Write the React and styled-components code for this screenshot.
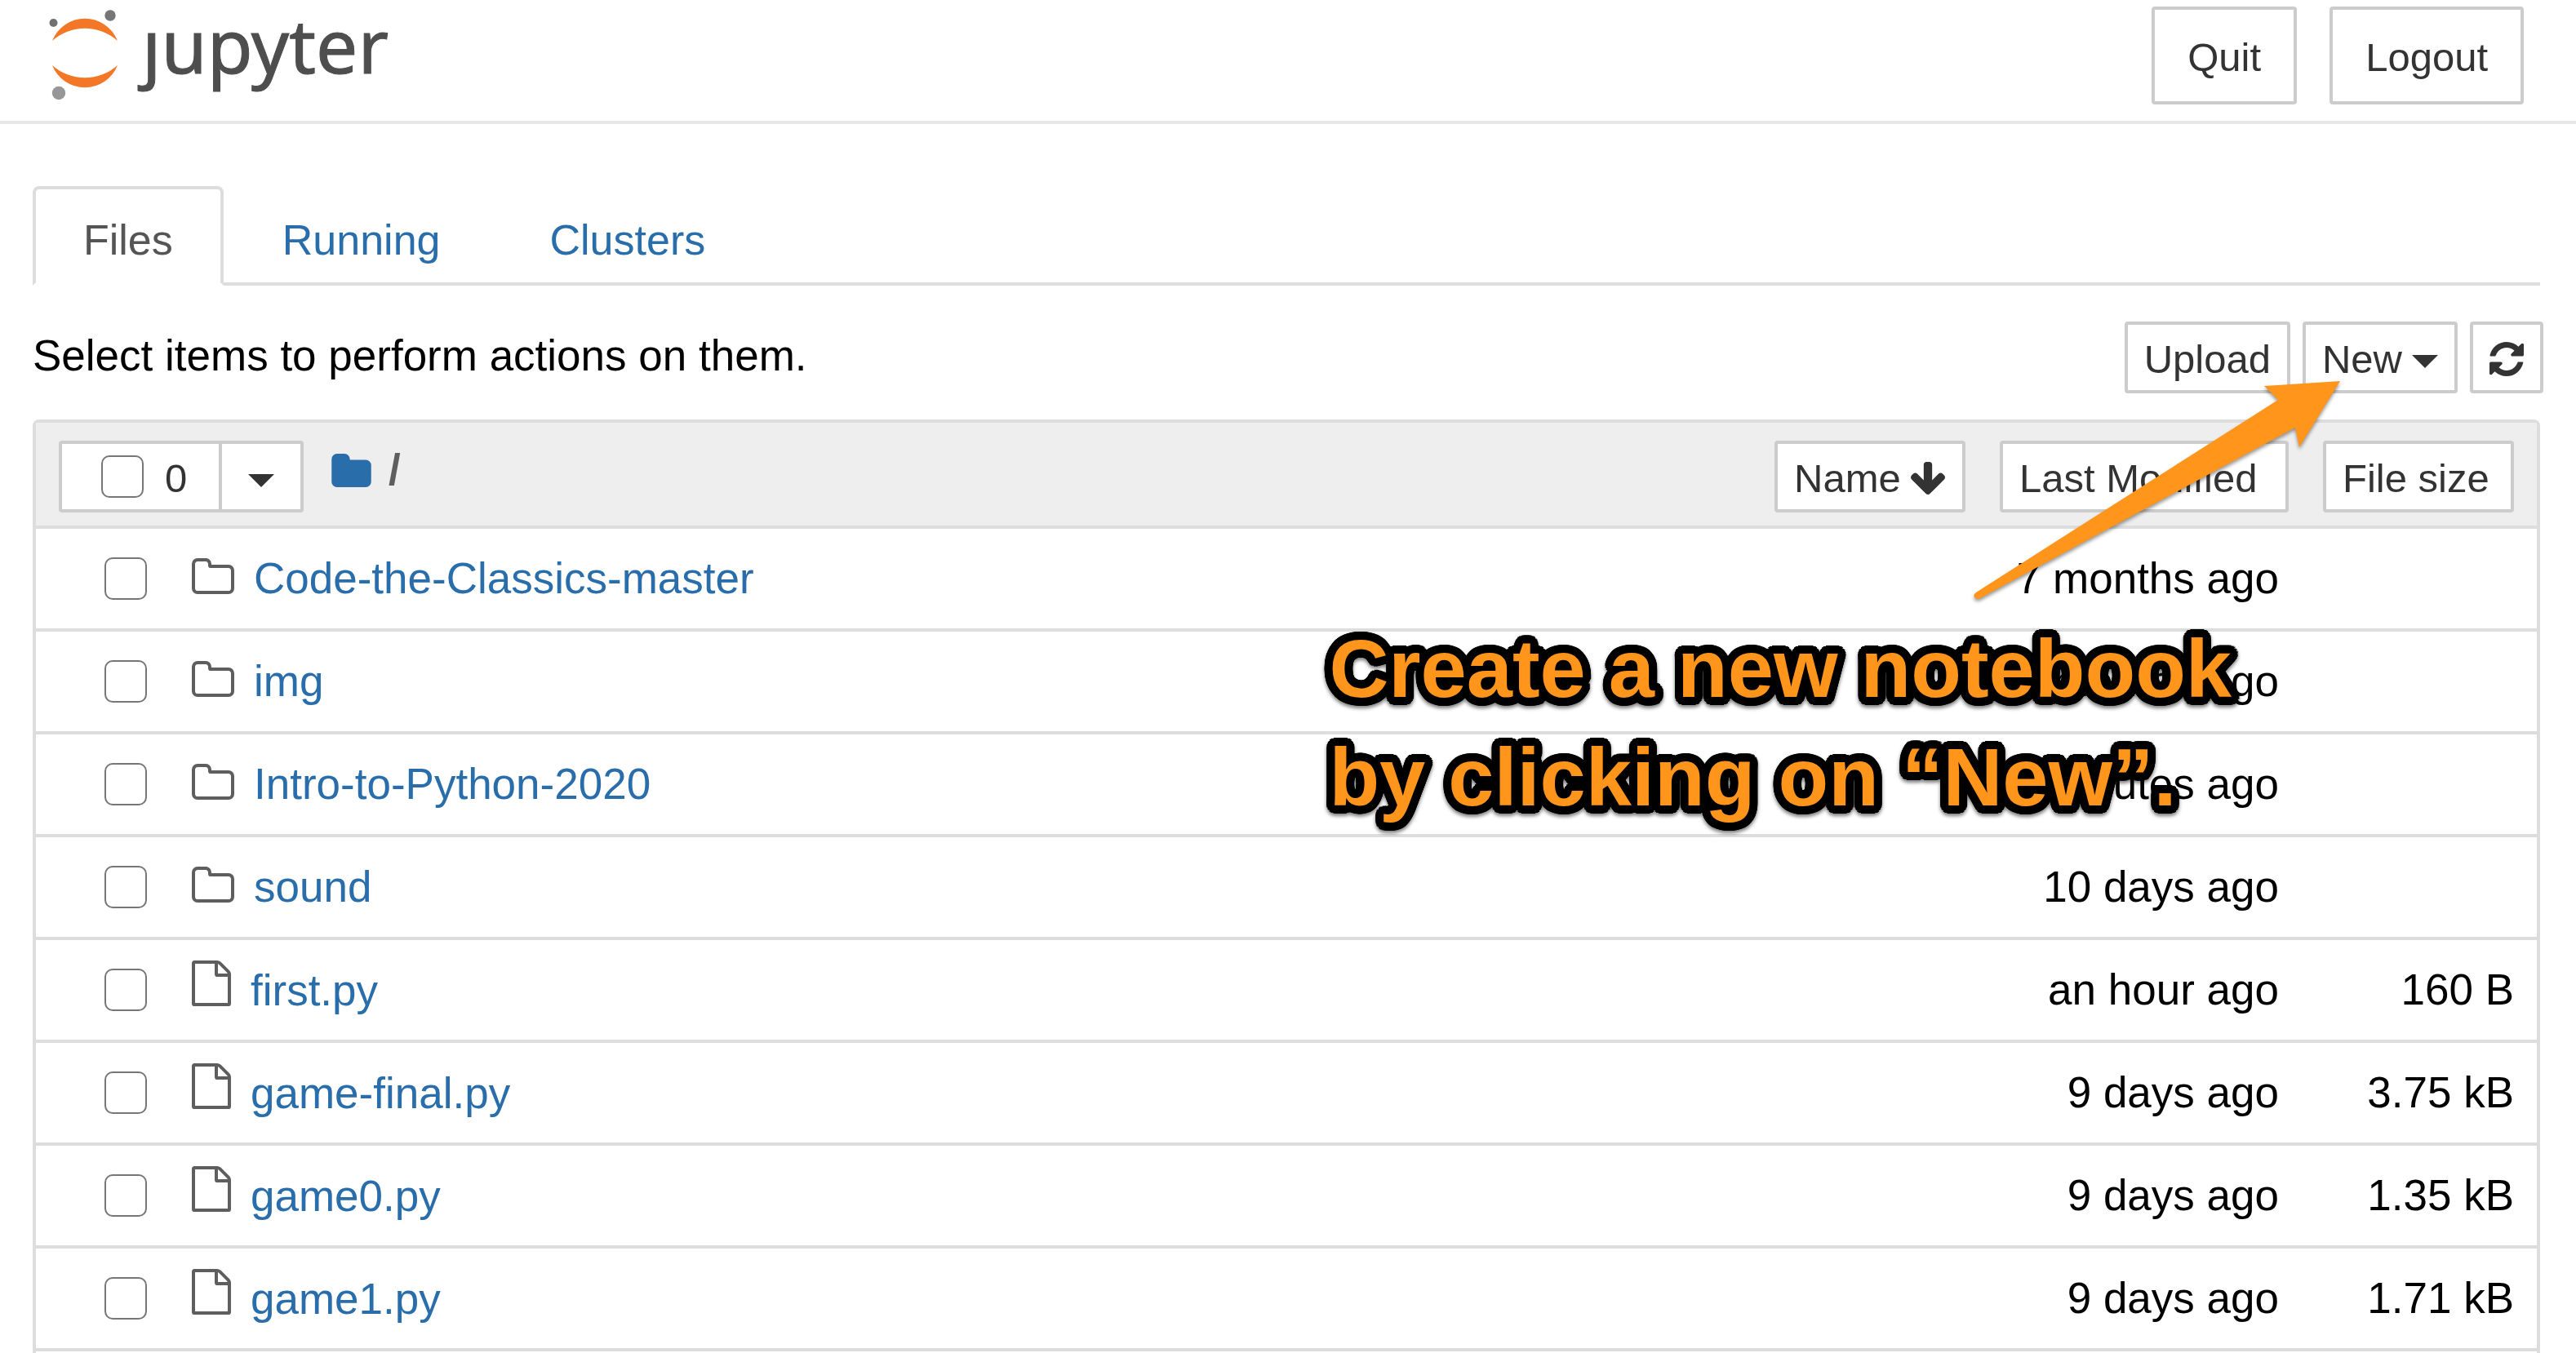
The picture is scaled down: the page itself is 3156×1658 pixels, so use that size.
import React, { useId, useState } from "react";
import styled, { createGlobalStyle } from "styled-components";

const GlobalStyle = createGlobalStyle`
  *, *::before, *::after { box-sizing: border-box; }
  html, body { margin: 0; background: #fff; }
  body {
    font-family: "Liberation Sans", Arial, sans-serif;
    font-size: 53px;
    line-height: 72px;
    color: #000;
  }
`;

const colors = {
  link: "#296eaa",
  line: "#ddd",
  button: "#ccc",
  text: "#333",
  icon: "#5e5e5e",
  note: "#ff951a",
};

const Page = styled.div`
  position: relative;
  min-height: 100vh;
  display: flex;
  flex-direction: column;
`;

const Header = styled.header`
  display: flex;
  justify-content: space-between;
  align-items: flex-start;
  height: 152px;
  padding: 8px 64px 0 56px;
  border-bottom: 4px solid #e7e7e7;
`;

const Brand = styled.a`
  display: flex;
  align-items: flex-start;
  gap: 26px;
  color: #4e4e4e;
  text-decoration: none;
`;

const BrandMark = styled.svg`
  display: block;
  width: 92px;
  height: 116px;
`;

const BrandName = styled.span`
  font-family: "Noto Sans", "Open Sans", sans-serif;
  font-size: 91px;
  line-height: 94px;
  -webkit-text-stroke: 1px #4e4e4e;
`;

const Actions = styled.div`
  display: flex;
  align-items: center;
  gap: ${(p) => p.$gap}px;
`;

const Button = styled.button`
  display: inline-flex;
  align-items: center;
  gap: 12px;
  height: ${(p) => (p.$large ? 120 : 88)}px;
  min-width: ${(p) => p.$min || 0}px;
  padding: 3px ${(p) => (p.$large ? 40 : 20)}px 0;
  border: 4px solid ${colors.button};
  border-radius: 4px;
  background: #fff;
  color: ${colors.text};
  font: inherit;
  font-size: 49px;
  line-height: 72px;
  white-space: nowrap;
`;

const Caret = styled.span`
  width: 0;
  height: 0;
  margin-top: 6px;
  border-top: 16px solid ${colors.text};
  border-left: 16px solid transparent;
  border-right: 16px solid transparent;
`;

const Glyph = styled.svg`
  display: block;
  flex: none;
  width: ${(p) => p.$w}px;
  height: ${(p) => p.$h}px;
  fill: ${(p) => p.$color || colors.text};
`;

const Main = styled.main`
  flex: 1;
  display: flex;
  flex-direction: column;
  padding: 76px 44px 0 40px;
`;

const Tabs = styled.nav`
  display: flex;
  gap: 10px;
  height: 122px;
  border-bottom: 4px solid ${colors.line};
`;

const Tab = styled.a`
  height: 122px;
  padding: 26px 58px 0;
  border: 4px solid ${(p) => (p.$active ? colors.line : "transparent")};
  border-bottom-color: ${(p) => (p.$active ? "#fff" : "transparent")};
  border-radius: 8px 8px 0 0;
  color: ${(p) => (p.$active ? "#555" : colors.link)};
  font-size: 52px;
  text-decoration: none;
`;

const Toolbar = styled.div`
  display: flex;
  justify-content: space-between;
  align-items: flex-start;
  margin: 44px -4px 32px 0;
`;

const Hint = styled.p`
  margin: 0;
  padding-top: 6px;
`;

const List = styled.section`
  flex: 1;
  border: 4px solid ${colors.line};
  border-bottom: 0;
  border-radius: 8px 8px 0 0;
`;

const ListHeader = styled.div`
  display: flex;
  justify-content: space-between;
  align-items: center;
  height: 130px;
  padding: 6px 28px 0;
  border-bottom: 4px solid ${colors.line};
  background: #eee;
`;

const Selector = styled.div`
  display: flex;
  align-items: center;
`;

const SelectAll = styled.label`
  display: flex;
  align-items: center;
  gap: 26px;
  width: 200px;
  height: 88px;
  padding-left: 48px;
  border: 4px solid ${colors.button};
  border-radius: 4px 0 0 4px;
  background: #fff;
  color: ${colors.text};
  font-size: 49px;
`;

const Count = styled.span`
  padding-top: 3px;
`;

const MenuButton = styled(Button)`
  justify-content: center;
  width: 104px;
  margin-left: -4px;
  padding: 3px 0 0;
  border-radius: 0 4px 4px 0;
`;

const Check = styled.input`
  display: block;
  appearance: none;
  flex: none;
  width: 52px;
  height: 52px;
  margin: 0;
  border: 2px solid #767676;
  border-radius: 10px;
  background: #fff;
  &:checked { background: ${colors.link}; }
`;

const Crumbs = styled.nav`
  display: flex;
  align-items: center;
  gap: 21px;
  margin-left: 34px;
  padding-bottom: 16px;
  color: ${colors.icon};
  font-weight: 700;
`;

const Table = styled.table`
  width: 100%;
  border-collapse: separate;
  border-spacing: 0;
`;

const Cell = styled.td`
  height: 126px;
  width: ${(p) => (p.$w ? p.$w + "px" : "auto")};
  padding: 0 ${(p) => p.$right || 0}px 0 ${(p) => p.$left || 0}px;
  border-bottom: 4px solid ${colors.line};
  text-align: ${(p) => (p.$end ? "right" : "left")};
  white-space: nowrap;
`;

const Entry = styled.div`
  display: flex;
  align-items: flex-end;
  gap: 24px;
`;

const EntryIcon = styled.span`
  padding-bottom: 17px;
`;

const EntryLink = styled.a`
  color: ${colors.link};
  text-decoration: none;
`;

const Arrow = styled.svg`
  position: absolute;
  top: 460px;
  right: 280px;
  width: 460px;
  height: 286px;
  fill: ${colors.note};
  filter: drop-shadow(0 3px 2px rgba(0, 0, 0, 0.4));
  pointer-events: none;
`;

/* Round-cornered outline: copies of the text set on rings around it. */
const ring = (radius, steps) =>
  Array.from({ length: steps }, (_, i) => {
    const angle = (i * 2 * Math.PI) / steps;
    return `${(radius * Math.cos(angle)).toFixed(1)}px ${(radius * Math.sin(angle)).toFixed(1)}px 0 #000`;
  });
const outline = [...ring(10, 36), ...ring(5, 12)].join(", ");

const Caption = styled.p`
  position: absolute;
  top: 753px;
  right: 422px;
  margin: 0;
  color: ${colors.note};
  font-size: 101px;
  font-weight: 700;
  line-height: 133px;
  white-space: nowrap;
  text-shadow: ${outline};
  filter: drop-shadow(0 3px 2px rgba(0, 0, 0, 0.5));
  pointer-events: none;
`;

const FOLDER = "M1728 608v704q0 92-66 158t-158 66h-1216q-92 0-158-66t-66-158v-960q0-92 66-158t158-66h320q92 0 158 66t66 158v32h672q92 0 158 66t66 158z";

function FolderIcon() {
  return (
    <Glyph viewBox="64 128 1664 1408" $w={49} $h={41} $color={colors.link}>
      <path d={FOLDER} />
    </Glyph>
  );
}

function FolderOutlineIcon() {
  return (
    <Glyph viewBox="64 128 1664 1408" $w={52} $h={44} $color={colors.icon}>
      <path d={"M1600 1312v-704q0-40-28-68t-68-28h-704q-40 0-68-28t-28-68v-64q0-40-28-68t-68-28h-320q-40 0-68 28t-28 68v960q0 40 28 68t68 28h1216q40 0 68-28t28-68z" + FOLDER} fillRule="evenodd" />
    </Glyph>
  );
}

function FileIcon() {
  return (
    <Glyph viewBox="128 0 1536 1792" $w={48} $h={56} $color={colors.icon}>
      <path d="M1596 380q28 28 48 76t20 88v1152q0 40-28 68t-68 28h-1344q-40 0-68-28t-28-68v-1600q0-40 28-68t68-28h896q40 0 88 20t76 48zm-444-244v376h376q-10-29-22-41l-313-313q-12-12-41-22zm384 1528v-1024h-416q-40 0-68-28t-28-68v-416h-768v1536h1280z" />
    </Glyph>
  );
}

function RefreshIcon() {
  return (
    <Glyph viewBox="128 128 1536 1536" $w={42} $h={42}>
      <path d="M1639 1056q0 5-1 7-64 268-268 434.5t-478 166.5q-146 0-282.5-55t-243.5-157l-129 129q-19 19-45 19t-45-19-19-45v-448q0-26 19-45t45-19h448q26 0 45 19t19 45-19 45l-137 137q71 66 161 102t187 36q134 0 250-65t186-179q11-17 53-117 8-23 30-23h192q13 0 22.5 9.5t9.5 22.5zm25-800v448q0 26-19 45t-45 19h-448q-26 0-45-19t-19-45 19-45l138-138q-148-137-349-137-134 0-250 65t-186 179q-11 17-53 117-8 23-30 23h-199q-13 0-22.5-9.5t-9.5-22.5v-7q65-268 270-434.5t480-166.5q146 0 284 55.5t245 156.5l130-129q19-19 45-19t45 19 19 45z" />
    </Glyph>
  );
}

function ArrowDownIcon() {
  return (
    <Glyph viewBox="117 128 1558 1483" $w={42} $h={40}>
      <path d="M1675 832q0 53-37 90l-651 652q-39 37-91 37-53 0-90-37l-651-652q-38-36-38-90 0-53 38-91l74-75q39-37 91-37 53 0 90 37l294 294v-704q0-52 38-90t90-38h128q52 0 90 38t38 90v704l294-294q37-37 90-37 52 0 91 37l75 75q37 39 37 91z" />
    </Glyph>
  );
}

const entries = [
  { name: "Code-the-Classics-master", folder: true, modified: "7 months ago" },
  { name: "img", folder: true, modified: "7 months ago" },
  { name: "Intro-to-Python-2020", folder: true, modified: "8 minutes ago" },
  { name: "sound", folder: true, modified: "10 days ago" },
  { name: "first.py", modified: "an hour ago", size: "160 B" },
  { name: "game-final.py", modified: "9 days ago", size: "3.75 kB" },
  { name: "game0.py", modified: "9 days ago", size: "1.35 kB" },
  { name: "game1.py", modified: "9 days ago", size: "1.71 kB" },
];

function EntryRow({ entry }) {
  return (
    <tr>
      <Cell $w={191} $left={84}>
        <Check type="checkbox" aria-label={`Select ${entry.name}`} />
      </Cell>
      <Cell>
        <Entry>
          <EntryIcon>{entry.folder ? <FolderOutlineIcon /> : <FileIcon />}</EntryIcon>
          <EntryLink href="#">{entry.name}</EntryLink>
        </Entry>
      </Cell>
      <Cell $end>{entry.modified}</Cell>
      <Cell $w={316} $right={28} $end>{entry.size}</Cell>
    </tr>
  );
}

export default function App() {
  const [tab, setTab] = useState("Files");
  const selectAllId = useId();
  return (
    <Page>
      <GlobalStyle />
      <Header>
        <Brand href="#" aria-label="jupyter">
          <BrandMark viewBox="56 8 92 116">
            <path d="M64 50A43 43 0 0 1 144 50A60 60 0 0 0 64 50Z" fill="#f37726" />
            <path d="M64 80A43 43 0 0 0 144 80A60 60 0 0 1 64 80Z" fill="#f37726" />
            <circle cx="65.500" cy="28" r="5" fill="#6f7070" />
            <circle cx="135" cy="19" r="6.700" fill="#767677" />
            <circle cx="72" cy="114" r="8.200" fill="#989798" />
          </BrandMark>
          <BrandName>ȷupyter</BrandName>
        </Brand>
        <Actions $gap={40}>
          <Button $large>Quit</Button>
          <Button $large>Logout</Button>
        </Actions>
      </Header>
      <Main>
        <Tabs>
          {["Files", "Running", "Clusters"].map((name) => (
            <Tab key={name} href="#" $active={tab === name} onClick={() => setTab(name)}>
              {name}
            </Tab>
          ))}
        </Tabs>
        <Toolbar>
          <Hint>Select items to perform actions on them.</Hint>
          <Actions $gap={15}>
            <Button>Upload</Button>
            <Button>
              New
              <Caret />
            </Button>
            <Button aria-label="Refresh">
              <RefreshIcon />
            </Button>
          </Actions>
        </Toolbar>
        <List>
          <ListHeader>
            <Selector>
              <SelectAll htmlFor={selectAllId}>
                <Check id={selectAllId} type="checkbox" />
                <Count>0</Count>
              </SelectAll>
              <MenuButton aria-label="Select by type">
                <Caret />
              </MenuButton>
              <Crumbs>
                <FolderIcon />
                <span>/</span>
              </Crumbs>
            </Selector>
            <Actions $gap={42}>
              <Button $min={234}>
                Name
                <ArrowDownIcon />
              </Button>
              <Button $min={354}>Last Modified</Button>
              <Button $min={234}>File size</Button>
            </Actions>
          </ListHeader>
          <Table>
            <tbody>
              {entries.map((entry) => (
                <EntryRow key={entry.name} entry={entry} />
              ))}
            </tbody>
          </Table>
        </List>
      </Main>
      <Arrow viewBox="2416 460 460 286">
        <path d="M2867 467L2774 473L2791 490L2421 726Q2417 729 2419 732Q2421 735 2426 733L2812 524L2817 548Z" />
      </Arrow>
      <Caption>
        Create a new notebook
        <br />
        by clicking on “New”.
      </Caption>
    </Page>
  );
}
